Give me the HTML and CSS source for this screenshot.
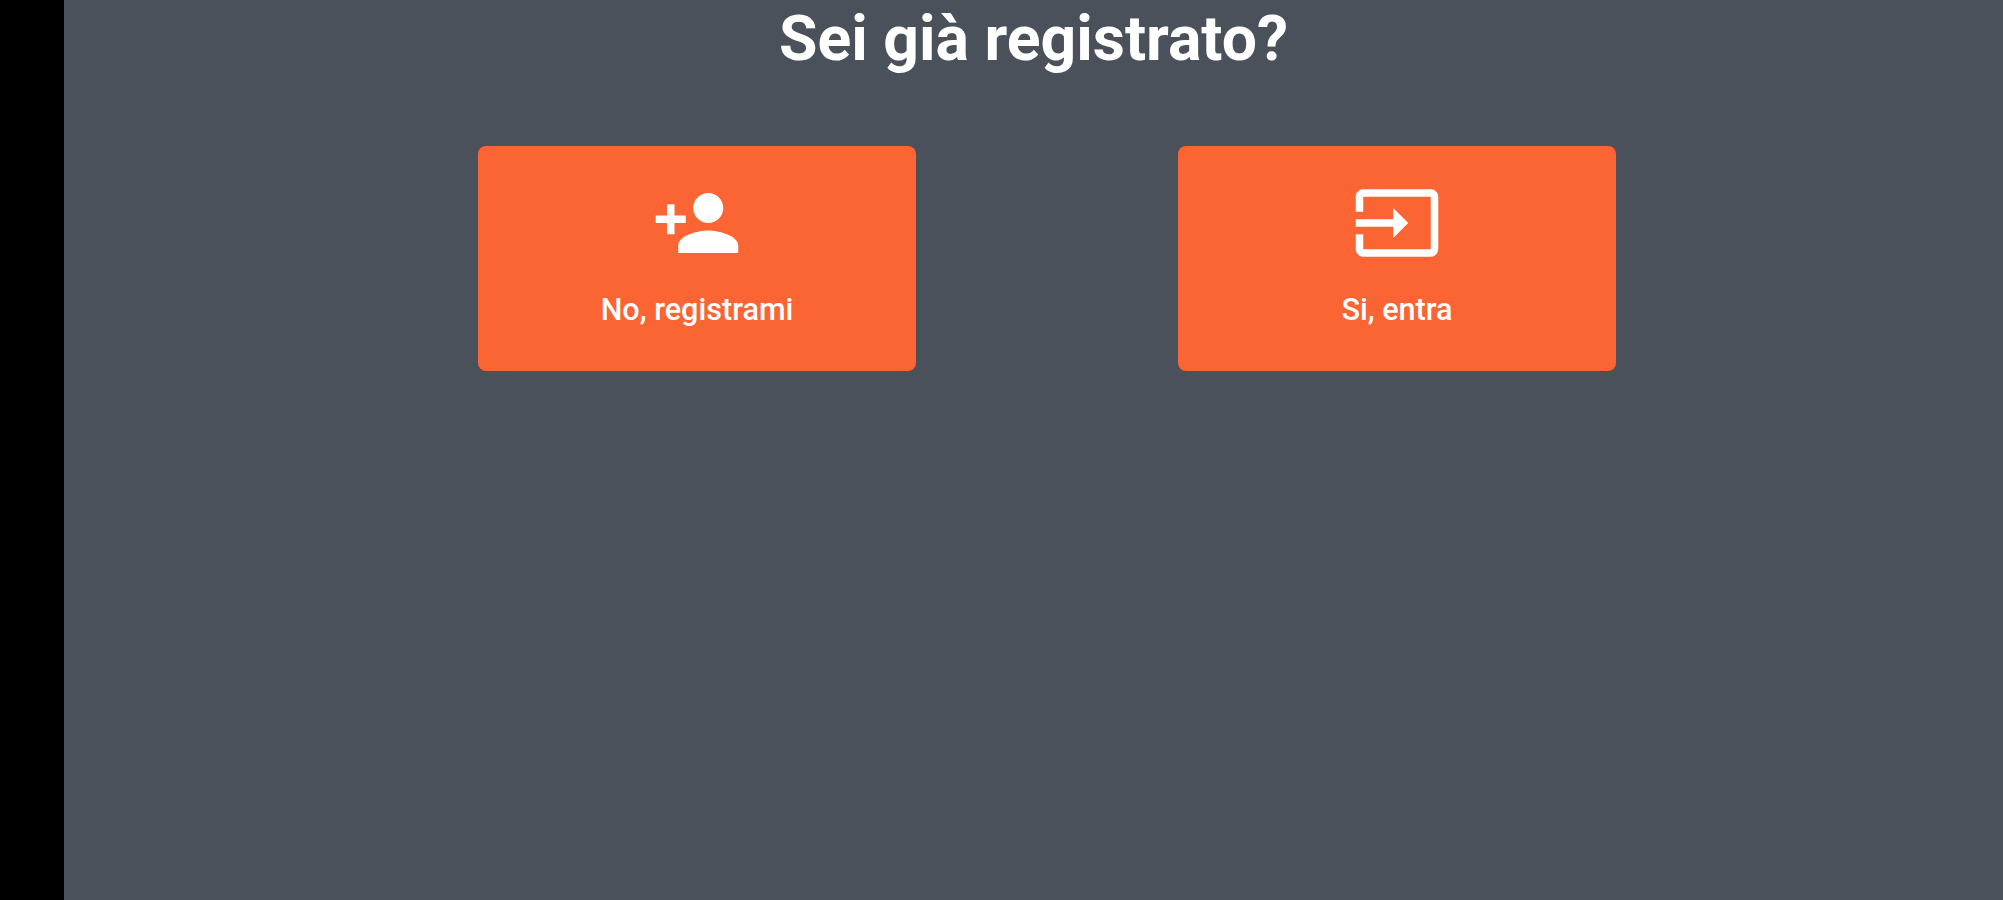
FILE: index.html
```html
<!DOCTYPE html>
<html lang="it">
<head>
    <meta charset="UTF-8">
    <meta name="viewport" content="width=device-width, initial-scale=1.0">
    <title>Sei già registrato?</title>
    <link rel="stylesheet" href="styles.css">
</head>
<body>
    <div class="container">
        <h1 class="title">Sei già registrato?</h1>
        <div class="choices">
            <button class="choice">
                <svg class="icon" viewBox="0 0 24 24">
                    <path d="M15 12c2.21 0 4-1.79 4-4s-1.79-4-4-4-4 1.79-4 4 1.79 4 4 4zm-9-2V7H4v3H1v2h3v3h2v-3h3v-2H6zm9 4c-2.67 0-8 1.34-8 4v2h16v-2c0-2.66-5.33-4-8-4z"/>
                </svg>
                <span class="label">No, registrami</span>
            </button>
            <button class="choice">
                <svg class="icon" viewBox="0 0 24 24">
                    <path d="M21 3.01H3c-1.1 0-2 .9-2 2V9h2V4.99h18v14.03H3V15H1v4.01c0 1.1.9 1.98 2 1.98h18c1.1 0 2-.88 2-1.98v-14c0-1.11-.9-2-2-2zM11 16l4-4-4-4v3H1v2h10v3z"/>
                </svg>
                <span class="label">Si, entra</span>
            </button>
        </div>
    </div>
</body>
</html>
```
FILE: styles.css
```css
* {
    margin: 0;
    padding: 0;
    box-sizing: border-box;
}

body {
    font-family: Roboto, sans-serif;
    height: 100vh;
    overflow: hidden;
    background-color: #4a515a;
    border-left: 64px solid black;
}

.container {
    display: flex;
    flex-direction: column;
    align-items: center;
}

.title {
    height: 146px;
    line-height: 77px;
    font-size: 62.5px;
    font-weight: 700;
    color: white;
}

.choices {
    display: flex;
    gap: 262px;
    margin-left: 27px;
}

.choice {
    width: 438px;
    height: 225px;
    padding-top: 32px;
    display: flex;
    flex-direction: column;
    align-items: center;
    justify-content: flex-start;
    border: none;
    border-radius: 8px;
    background-color: #fb6433;
    color: white;
    font-family: inherit;
    cursor: pointer;
}

.icon {
    width: 90px;
    height: 90px;
    fill: white;
}

.label {
    margin-top: 24px;
    font-size: 30.6px;
    line-height: 36px;
    font-weight: 500;
}
```
